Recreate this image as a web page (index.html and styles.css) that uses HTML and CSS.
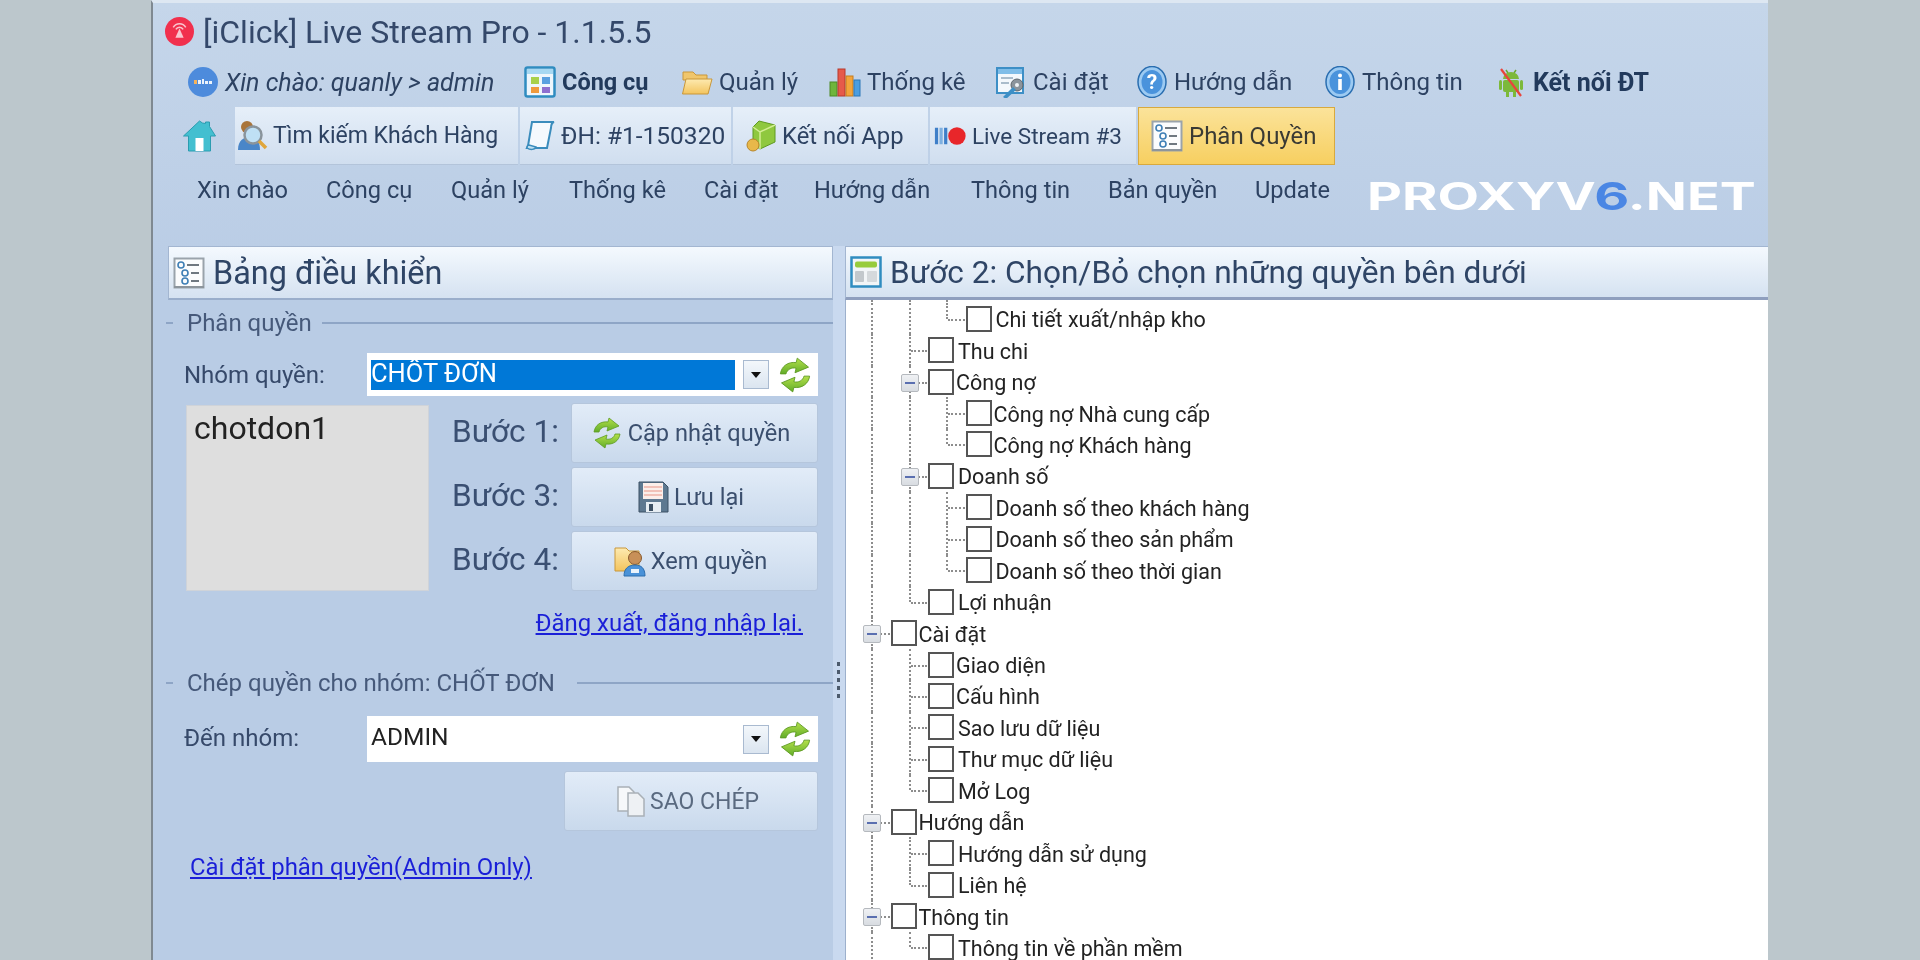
FILE: index.html
```html
<!DOCTYPE html>
<html lang="vi">
<head>
<meta charset="utf-8">
<title>[iClick] Live Stream Pro - 1.1.5.5</title>
<link rel="stylesheet" href="styles.css">
</head>
<body>
<svg class="defs" width="0" height="0" aria-hidden="true">
  <defs>
    <linearGradient id="g-green" x1="0" y1="0" x2="0" y2="1"><stop offset="0" stop-color="#b4e04a"/><stop offset="1" stop-color="#62ad2a"/></linearGradient>
    <linearGradient id="g-folder" x1="0" y1="0" x2="0" y2="1"><stop offset="0" stop-color="#fdeab0"/><stop offset="1" stop-color="#f3c45e"/></linearGradient>
    <symbol id="i-refresh" viewBox="0 0 32 32">
      <path d="M3 15C4 8 10 4 17 5l1-4 10 8-12 5 1-4c-4-1-8 1-9 5z" fill="url(#g-green)" stroke="#5d9a22" stroke-width=".8"/>
      <path d="M29 17c-1 7-7 11-14 10l-1 4-10-8 12-5-1 4c4 1 8-1 9-5z" fill="url(#g-green)" stroke="#5d9a22" stroke-width=".8"/>
    </symbol>
    <symbol id="i-rules" viewBox="0 0 32 32">
      <rect x="1.500" y="1.500" width="29" height="29" fill="#fbfcfd" stroke="#9aa3ab" stroke-width="2"/>
      <path d="M1 29h30v2H1z" fill="#8d959c"/>
      <circle cx="8" cy="8" r="3" fill="none" stroke="#3f7fb5" stroke-width="1.600"/>
      <circle cx="12" cy="16" r="3" fill="none" stroke="#3f7fb5" stroke-width="1.600"/>
      <circle cx="12" cy="24" r="3" fill="none" stroke="#3f7fb5" stroke-width="1.600"/>
      <path d="M14 8h12M18 16h8M18 24h8" stroke="#6f7880" stroke-width="2"/>
    </symbol>
  </defs>
</svg>

<main class="window">
  <header class="titlebar">
    <svg class="app-icon" viewBox="0 0 28 28" aria-hidden="true">
      <circle cx="14" cy="14" r="14" fill="#f1304d"/>
      <path d="M14 11l4 9h-8z" fill="#f9c6cf"/>
      <path d="M8 10a7 7 0 0 1 12 0M10.500 12a4 4 0 0 1 7 0" fill="none" stroke="#f9c6cf" stroke-width="1.500"/>
    </svg>
    <h1 class="app-title">[iClick] Live Stream Pro - 1.1.5.5</h1>
  </header>

  <nav class="iconmenu">
    <a class="iconmenu-item">
      <svg class="ico" viewBox="0 0 32 32" aria-hidden="true"><circle cx="16" cy="16" r="15" fill="#4d8bdc"/><rect x="7" y="14" width="3" height="4" fill="#f4b25a"/><path d="M11 14h3v4h-3zM15 13h2v5h-2zM18 15h3v3h-3zM22 15h3v3h-3z" fill="#eaf2fb"/></svg>
      <span class="greet">Xin chào: quanly &gt; admin</span>
    </a>
    <a class="iconmenu-item">
      <svg class="ico" viewBox="0 0 32 32" aria-hidden="true"><rect x="1.500" y="1.500" width="29" height="29" rx="2" fill="#eef6fc" stroke="#2f8cc0" stroke-width="2.500"/><rect x="3" y="3" width="26" height="5" fill="#a7d8f2"/><rect x="7" y="11" width="8" height="7" fill="#a9d14a"/><rect x="18" y="11" width="8" height="7" fill="#5aa0e0"/><rect x="7" y="21" width="8" height="6" fill="#f09a3c"/><rect x="18" y="21" width="8" height="6" fill="#8e6fd0"/></svg>
      <b class="strong">Công cụ</b>
    </a>
    <a class="iconmenu-item">
      <svg class="ico" viewBox="0 0 32 32" aria-hidden="true"><path d="M2 6h10l3 3h11v5H2z" fill="#f0c66c" stroke="#c9973a"/><path d="M1.500 28 5 13h26l-4 15z" fill="url(#g-folder)" stroke="#c9973a"/></svg>
      <span>Quản lý</span>
    </a>
    <a class="iconmenu-item">
      <svg class="ico" viewBox="0 0 32 32" aria-hidden="true"><rect x="1" y="16" width="7" height="14" fill="#6fb53c" stroke="#4d8a25"/><rect x="9" y="3" width="7" height="27" fill="#e65a4a" stroke="#b8382c"/><rect x="17" y="10" width="7" height="20" fill="#f3a43a" stroke="#c67d1c"/><rect x="25" y="14" width="6" height="16" fill="#4b9ee0" stroke="#2d78b8"/></svg>
      <span>Thống kê</span>
    </a>
    <a class="iconmenu-item">
      <svg class="ico" viewBox="0 0 32 32" aria-hidden="true"><rect x="2" y="2" width="26" height="25" fill="#f3f8fc" stroke="#3d8fc6" stroke-width="2"/><rect x="3" y="3" width="24" height="5" fill="#7fbde8"/><path d="M6 12h12M6 17h8" stroke="#a9bccb" stroke-width="2"/><circle cx="22" cy="19" r="6" fill="#8b949c" stroke="#5d666d"/><circle cx="22" cy="19" r="2" fill="#eef2f5"/><path d="M8 31l10-10 3 3-10 9z" fill="#3d8fc6"/></svg>
      <span>Cài đặt</span>
    </a>
    <a class="iconmenu-item">
      <svg class="ico" viewBox="0 0 32 32" aria-hidden="true"><ellipse cx="16" cy="16" rx="14" ry="15.500" fill="#9ccaf2" stroke="#2a6eb0" stroke-width="1.500"/><ellipse cx="16" cy="16" rx="10.500" ry="12" fill="#4a93dc"/><text class="glyph" x="16" y="23" text-anchor="middle">?</text></svg>
      <span>Hướng dẫn</span>
    </a>
    <a class="iconmenu-item">
      <svg class="ico" viewBox="0 0 32 32" aria-hidden="true"><ellipse cx="16" cy="16" rx="14" ry="15.500" fill="#9ccaf2" stroke="#2a6eb0" stroke-width="1.500"/><ellipse cx="16" cy="16" rx="10.500" ry="12" fill="#4a93dc"/><circle cx="16" cy="9.500" r="2" fill="#fff"/><rect x="14.200" y="13" width="3.600" height="11" fill="#fff"/></svg>
      <span>Thông tin</span>
    </a>
    <a class="iconmenu-item">
      <svg class="ico" viewBox="0 0 32 32" aria-hidden="true"><path d="M11 4l2 3M21 4l-2 3" stroke="#6aa82e" stroke-width="1.500"/><path d="M8 13a8 7 0 0 1 16 0z" fill="#7cb93a"/><rect x="8" y="14" width="16" height="12" rx="2" fill="#7cb93a"/><rect x="4" y="14" width="3" height="10" rx="1.500" fill="#7cb93a"/><rect x="25" y="14" width="3" height="10" rx="1.500" fill="#7cb93a"/><rect x="11" y="25" width="3" height="6" fill="#7cb93a"/><rect x="18" y="25" width="3" height="6" fill="#7cb93a"/><path d="M6 3l20 27" stroke="#e8443c" stroke-width="2.200"/></svg>
      <b class="strong strong-wide">Kết nối ĐT</b>
    </a>
  </nav>

  <nav class="tabbar">
    <svg class="home" viewBox="0 0 34 32" aria-hidden="true"><path d="M17 1 1 16h5v15h22V16h5L27 6.500V2h-4v1.500L20 3z" fill="#43bfd0" stroke="#2b9cb0"/><rect x="13" y="18" width="8" height="13" fill="#fff"/></svg>
    <a class="tab tab-search">
      <svg class="ico" viewBox="0 0 32 32" aria-hidden="true"><circle cx="10" cy="7" r="6" fill="#a9743a"/><path d="M1 30c0-10 6-13 12-13s10 4 10 13z" fill="#4a86c8"/><circle cx="16" cy="15" r="8.500" fill="#bfe0f5" stroke="#8a949c" stroke-width="2.500"/><path d="M22 21l7 7" stroke="#e0a63c" stroke-width="3.500"/></svg>
      <span>Tìm kiếm Khách Hàng</span>
    </a>
    <a class="tab tab-order">
      <svg class="ico" viewBox="0 0 32 32" aria-hidden="true"><path d="M8 2h22c-3 1-3 4-3 6l-4 20H3l1-2z" fill="#f4f9fd" stroke="#3a8cbc" stroke-width="2"/><path d="M3 28c3 2 8 2 9-1l-7-2c-2 0-2 2-2 3z" fill="#bfe0f2" stroke="#3a8cbc" stroke-width="1.500"/></svg>
      <span>ĐH: #1-150320</span>
    </a>
    <a class="tab tab-app">
      <svg class="ico" viewBox="0 0 32 32" aria-hidden="true"><path d="M14 1 30 5v17l-15 7L8 24V7z" fill="#8fc83f" stroke="#5f9a22"/><path d="M8 7l7 5 15-7M15 12v17" fill="none" stroke="#d3ed94" stroke-width="1.500"/><circle cx="8" cy="25" r="6" fill="#e8b84a" stroke="#b8862a"/></svg>
      <span>Kết nối App</span>
    </a>
    <a class="tab tab-live">
      <svg class="ico-wide" viewBox="0 0 36 26" aria-hidden="true"><rect x="1" y="4" width="3.500" height="18" fill="#3f7fc8"/><rect x="6" y="4" width="3.500" height="18" fill="#7fb0e0"/><rect x="11" y="4" width="3.500" height="18" fill="#3f7fc8"/><circle cx="25" cy="13" r="9.500" fill="#e8262a"/></svg>
      <span>Live Stream #3</span>
    </a>
    <a class="tab tab-active tab-perm">
      <svg class="ico"><use href="#i-rules"/></svg>
      <span>Phân Quyền</span>
    </a>
  </nav>

  <div class="textmenu-wrap">
    <nav class="textmenu">
      <a>Xin chào</a><a>Công cụ</a><a>Quản lý</a><a>Thống kê</a><a>Cài đặt</a><a>Hướng dẫn</a><a>Thông tin</a><a>Bản quyền</a><a>Update</a>
    </nav>
    <div class="watermark">PROXYV<span class="wm-six">6</span>.NET</div>
  </div>

  <div class="panes">
    <aside class="left-pane">
      <div class="pane-head pane-head-left">
        <svg class="ico pane-ico"><use href="#i-rules"/></svg>
        <h2>Bảng điều khiển</h2>
      </div>

      <div class="group-head"><span class="stub"></span><span class="group-title">Phân quyền</span><span class="rule"></span></div>

      <div class="form-row">
        <label class="form-label">Nhóm quyền:</label>
        <div class="combo combo-short">
          <span class="combo-value selected">CHỐT ĐƠN</span>
          <span class="combo-btn"><i class="caret"></i></span>
          <svg class="refresh"><use href="#i-refresh"/></svg>
        </div>
      </div>

      <div class="perm-body">
        <div class="userbox">chotdon1</div>
        <div class="steps">
          <div class="step"><span class="step-label">Bước 1:</span>
            <button class="btn"><svg class="ico"><use href="#i-refresh"/></svg>Cập nhật quyền</button></div>
          <div class="step"><span class="step-label">Bước 3:</span>
            <button class="btn"><svg class="ico" viewBox="0 0 32 32" aria-hidden="true"><path d="M2 1h24l5 5v25H2z" fill="#5d7890" stroke="#3c5064"/><rect x="6" y="2" width="20" height="16" fill="#fbeeea"/><path d="M7 6h18M7 10h18M7 14h18" stroke="#eeb2a8" stroke-width="1.500"/><rect x="9" y="21" width="15" height="10" fill="#e6edf3"/><rect x="12" y="23" width="4" height="7" fill="#3c5064"/></svg>Lưu lại</button></div>
          <div class="step"><span class="step-label">Bước 4:</span>
            <button class="btn"><svg class="ico" viewBox="0 0 32 32" aria-hidden="true"><path d="M1 3h11l3 3h10v20H1z" fill="url(#g-folder)" stroke="#c9973a"/><circle cx="21" cy="13" r="6.500" fill="#c89058" stroke="#8a5a2c"/><path d="M10 31c0-8 5-11 11-11s10 3 10 11z" fill="#4a92d8" stroke="#2d6eae"/><rect x="17" y="24" width="8" height="4" fill="#eaf3fb"/></svg>Xem quyền</button></div>
        </div>
      </div>

      <div class="link-row link-right"><a class="link">Đăng xuất, đăng nhập lại.</a></div>

      <div class="group-head group-second"><span class="stub"></span><span class="group-title">Chép quyền cho nhóm: CHỐT ĐƠN</span><span class="rule"></span></div>

      <div class="form-row form-row-second">
        <label class="form-label">Đến nhóm:</label>
        <div class="combo combo-tall">
          <span class="combo-value">ADMIN</span>
          <span class="combo-btn"><i class="caret"></i></span>
          <svg class="refresh"><use href="#i-refresh"/></svg>
        </div>
      </div>

      <div class="copy-row">
        <button class="btn btn-copy"><svg class="ico" viewBox="0 0 32 32" aria-hidden="true"><path d="M3 2h11l5 5v19H3z" fill="#f6f8fa" stroke="#a9b0b6" stroke-width="1.500"/><path d="M13 8h10l6 6v17H13z" fill="#eef1f4" stroke="#a9b0b6" stroke-width="1.500"/></svg>SAO CHÉP</button>
      </div>

      <div class="link-row link-left"><a class="link">Cài đặt phân quyền(Admin Only)</a></div>
    </aside>

    <div class="splitter"><span class="grip"></span></div>

    <section class="right-pane">
      <div class="pane-head pane-head-right">
        <svg class="ico pane-ico" viewBox="0 0 32 32" aria-hidden="true"><rect x="1.500" y="1.500" width="29" height="29" fill="#f2f5f7" stroke="#2f8cc0" stroke-width="2.500"/><rect x="5" y="5.500" width="22" height="6" rx="2" fill="#97cc3c"/><rect x="5" y="15" width="9" height="11" rx="1" fill="#c3c8cc"/><rect x="17" y="15" width="10" height="11" rx="1" fill="#d5d9dc"/></svg>
        <h2>Bước 2: Chọn/Bỏ chọn những quyền bên dưới</h2>
      </div>

      <ul class="tree">
        <li class="tree-top"><i class="c v"></i><i class="c v"></i><i class="c v"></i></li>
        <li class="node"><i class="c v"></i><i class="c v"></i><i class="c l"></i><i class="box"></i><span class="tx tx-r">Chi tiết xuất/nhập kho</span></li>
        <li class="node"><i class="c v"></i><i class="c t"></i><i class="box"></i><span class="tx tx-r">Thu chi</span></li>
        <li class="node"><i class="c v"></i><i class="c x"><b></b></i><i class="box"></i><span class="tx">Công nợ</span></li>
        <li class="node"><i class="c v"></i><i class="c v"></i><i class="c t"></i><i class="box"></i><span class="tx">Công nợ Nhà cung cấp</span></li>
        <li class="node"><i class="c v"></i><i class="c v"></i><i class="c l"></i><i class="box"></i><span class="tx">Công nợ Khách hàng</span></li>
        <li class="node"><i class="c v"></i><i class="c x"><b></b></i><i class="box"></i><span class="tx tx-r">Doanh số</span></li>
        <li class="node"><i class="c v"></i><i class="c v"></i><i class="c t"></i><i class="box"></i><span class="tx tx-r">Doanh số theo khách hàng</span></li>
        <li class="node"><i class="c v"></i><i class="c v"></i><i class="c t"></i><i class="box"></i><span class="tx tx-r">Doanh số theo sản phẩm</span></li>
        <li class="node"><i class="c v"></i><i class="c v"></i><i class="c l"></i><i class="box"></i><span class="tx tx-r">Doanh số theo thời gian</span></li>
        <li class="node"><i class="c v"></i><i class="c l"></i><i class="box"></i><span class="tx tx-r">Lợi nhuận</span></li>
        <li class="node"><i class="c x"><b></b></i><i class="box"></i><span class="tx">Cài đặt</span></li>
        <li class="node"><i class="c v"></i><i class="c t"></i><i class="box"></i><span class="tx">Giao diện</span></li>
        <li class="node"><i class="c v"></i><i class="c t"></i><i class="box"></i><span class="tx">Cấu hình</span></li>
        <li class="node"><i class="c v"></i><i class="c t"></i><i class="box"></i><span class="tx tx-r">Sao lưu dữ liệu</span></li>
        <li class="node"><i class="c v"></i><i class="c t"></i><i class="box"></i><span class="tx tx-r">Thư mục dữ liệu</span></li>
        <li class="node"><i class="c v"></i><i class="c l"></i><i class="box"></i><span class="tx tx-r">Mở Log</span></li>
        <li class="node"><i class="c x"><b></b></i><i class="box"></i><span class="tx">Hướng dẫn</span></li>
        <li class="node"><i class="c v"></i><i class="c t"></i><i class="box"></i><span class="tx tx-r">Hướng dẫn sử dụng</span></li>
        <li class="node"><i class="c v"></i><i class="c l"></i><i class="box"></i><span class="tx tx-r">Liên hệ</span></li>
        <li class="node"><i class="c x"><b></b></i><i class="box"></i><span class="tx">Thông tin</span></li>
        <li class="node"><i class="c v"></i><i class="c l"></i><i class="box"></i><span class="tx tx-r">Thông tin về phần mềm</span></li>
      </ul>
    </section>
  </div>
</main>
</body>
</html>
```

FILE: styles.css
```css
* { box-sizing: border-box; }
html, body { margin: 0; height: 960px; overflow: hidden; }
body {
  background: #bcc7cc;
  padding-left: 151px;
  font-family: Roboto, "Noto Sans", sans-serif;
  color: #2d4262;
}
.defs { position: absolute; }
a { display: block; }
svg { display: block; flex: none; }
h1, h2 { margin: 0; font-weight: 400; }

.window {
  width: 1617px;
  height: 960px;
  overflow: hidden;
  display: flex;
  flex-direction: column;
  border-left: 2px solid #7f8991;
  border-top: 3px solid #dde7f2;
  background: linear-gradient(#c5d6ea, #b9cce5 30%, #b9cce5);
  filter: blur(.55px);
}

/* Title */
.titlebar { height: 57px; display: flex; align-items: center; padding-left: 12px; gap: 9px; }
.app-icon { width: 29px; height: 29px; }
.app-title { font-size: 32px; color: #34486a; }

/* Icon menu */
.iconmenu {
  display: grid;
  grid-template-columns: 337px 157px 148px 166px 141px 188px 171px auto;
  height: 44px;
  padding-left: 34px;
  align-items: center;
}
.iconmenu-item { display: flex; align-items: center; gap: 6px; font-size: 24px; white-space: nowrap; }
.ico { width: 32px; height: 32px; }
.glyph { fill: #fff; font-size: 21px; font-weight: 700; }
.greet { font-style: italic; font-size: 25px; }
.strong { font-weight: 700; font-size: 23.500px; color: #223a5c; }
.strong-wide { font-size: 25px; }

/* Tabs */
.tabbar { display: flex; align-items: center; gap: 2px; height: 58px; margin-top: 3px; padding-left: 29px; }
.home { width: 35px; height: 32px; margin-right: 16px; }
.tab {
  height: 58px;
  display: flex;
  align-items: center;
  gap: 5px;
  padding-left: 3px;
  font-size: 23px;
  white-space: nowrap;
  background: linear-gradient(#e6eff9, #d0deef);
  border-bottom: 1px solid #b3c4da;
}
.tab-search { width: 283px; padding-left: 2px; gap: 4px; }
.tab-order { width: 211px; font-size: 24.500px; padding-left: 4px; }
.tab-app { width: 195px; font-size: 23.800px; padding-left: 12px; }
.tab-live { width: 206px; font-size: 22.500px; padding-left: 4px; }
.tab-perm { width: 197px; }
.tab-active {
  background: linear-gradient(#fbe39a, #f7cf60);
  border: 1px solid #d8a93e;
  color: #3a3a34;
  padding-left: 12px;
  gap: 6px;
  font-size: 24px;
}
.ico-wide { width: 33px; height: 26px; }

/* Text menu */
.textmenu-wrap { height: 81px; position: relative; }
.textmenu {
  display: grid;
  grid-template-columns: 129px 125px 118px 135px 110px 157px 137px 147px auto;
  padding: 11px 0 0 44px;
  font-size: 23.600px;
  white-space: nowrap;
}
.watermark {
  position: absolute;
  left: 1214px;
  top: 9px;
  font-family: Inter, "Liberation Sans", sans-serif;
  font-weight: 700;
  font-size: 38px;
  line-height: 44px;
  color: #fff;
  white-space: nowrap;
  transform: scaleX(1.420);
  transform-origin: left center;
}
.wm-six { color: #4a86e4; }

/* Panes */
.panes { flex: 1; min-height: 0; display: flex; padding-left: 15px; }
.left-pane { width: 665px; flex: none; }
.splitter { width: 12px; flex: none; background: #c9d9ef; position: relative; }
.grip {
  position: absolute;
  left: 4px;
  top: 416px;
  width: 3px;
  height: 36px;
  background: repeating-linear-gradient(#4c5a6c 0 4px, transparent 4px 8px);
}
.right-pane { flex: 1; min-width: 0; display: flex; flex-direction: column; }

.pane-head {
  height: 54px;
  display: flex;
  align-items: center;
  gap: 8px;
  padding-left: 4px;
  background: linear-gradient(#f4f9fe, #d5e2f1);
  border: 1px solid #a3b6d1;
  border-bottom: 2px solid #9aaecb;
}
.pane-head h2 { font-size: 32.400px; color: #2f4566; }
.pane-head-right { height: 54px; border-right: 0; border-bottom: 3px solid #8f9fbe; }
.pane-head-right h2 { font-size: 31.600px; }
.pane-ico { width: 32px; height: 32px; }

/* Groups */
.group-head { height: 46px; display: flex; align-items: center; margin-left: -2px; font-size: 24px; color: #46597a; }
.stub { width: 7px; height: 2px; background: #8ea5c6; margin-right: 14px; flex: none; }
.rule { flex: 1; height: 2px; background: #8ea5c6; margin-left: 10px; }
.group-second { margin-top: 23px; }
.group-second .rule { margin-left: 22px; }

/* Forms */
.form-row { display: flex; align-items: center; margin-top: 7px; padding-left: 16px; }
.form-row-second { margin-top: 10px; }
.form-label { width: 183px; font-size: 24px; color: #36496a; }
.form-row-second .form-label { padding-bottom: 2px; }
.combo { width: 451px; background: #fff; display: flex; align-items: center; padding-left: 4px; }
.combo-short { height: 43px; }
.combo-tall { height: 46px; }
.combo-value { width: 364px; height: 30px; line-height: 26px; font-size: 24.500px; color: #222; white-space: nowrap; }
.selected { background: #0078d7; color: #fff; font-size: 25.500px; }
.combo-btn {
  width: 26px; height: 29px; margin-left: 8px;
  display: flex; align-items: center; justify-content: center;
  background: linear-gradient(#f3f7fb, #dbe5f0);
  border: 1px solid #a9bad0;
}
.caret { width: 0; height: 0; border: 5px solid transparent; border-top: 6px solid #111; border-bottom: 0; }
.refresh { width: 36px; height: 36px; margin-left: 8px; }

.perm-body { display: flex; margin: 9px 0 0 18px; }
.userbox { width: 243px; height: 186px; background: #dedede; padding: 1px 7px; font-size: 32px; line-height: 42px; color: #222; border: 1px solid #cfd3d9; }
.steps { margin: -2px 0 0 23px; display: flex; flex-direction: column; gap: 4px; }
.step { display: flex; align-items: center; }
.step-label { width: 119px; font-size: 31.500px; color: #3a4f72; padding-bottom: 4px; }
.btn {
  width: 247px;
  height: 60px;
  display: flex;
  align-items: center;
  justify-content: center;
  gap: 5px;
  font: inherit;
  font-size: 23.600px;
  color: #3b4f6e;
  background: linear-gradient(#e2ecf8, #c9d9ec);
  border: 1px solid #b5c6dc;
  border-radius: 3px;
  padding: 0 8px 0 0;
}
.link-row { height: 28px; font-size: 23.900px; line-height: 28px; }
.link-right { margin-top: 18px; display: flex; justify-content: flex-end; padding-right: 30px; }
.link-left { margin-top: 22px; padding-left: 22px; }
.link { color: #1a1fd8; text-decoration: underline; white-space: nowrap; }
.copy-row { display: flex; justify-content: flex-end; margin-top: 9px; padding-right: 15px; }
.btn-copy { width: 254px; color: #5a6a80; font-size: 23px; gap: 3px; }

/* Tree */
.tree {
  flex: 1;
  min-height: 0;
  margin: 0;
  padding: 0 0 0 7px;
  list-style: none;
  background: #fff;
  border-left: 1px solid #9db0cc;
  overflow: hidden;
}
.tree-top { height: 3px; display: flex; }
.node { height: 31.450px; display: flex; align-items: center; }
.c { width: 37.500px; height: 100%; flex: none; position: relative; display: block; }
.c::before {
  content: "";
  position: absolute;
  left: 18px;
  top: 0;
  bottom: 0;
  border-left: 2px dotted #8d8d8d;
}
.t::after, .l::after, .x::after {
  content: "";
  position: absolute;
  left: 20px;
  right: 1px;
  top: 50%;
  border-top: 2px dotted #8d8d8d;
}
.l::before { bottom: 50%; }
.x b {
  position: absolute;
  left: 10px;
  top: 50%;
  width: 18px;
  height: 18px;
  margin-top: -8px;
  z-index: 1;
  background: linear-gradient(#eff1f4, #d8dce1);
  border: 1px solid #b5b9be;
  border-radius: 2px;
}
.x b::before {
  content: "";
  position: absolute;
  left: 3px;
  right: 3px;
  top: 7px;
  height: 2px;
  background: #5a6fb0;
}
.box { width: 26px; height: 26px; flex: none; display: block; border: 2px solid #555; }
.tx { margin-left: 2px; padding-top: 2px; font-size: 21.500px; color: #222; white-space: nowrap; }
.tx-r { margin-left: 4px; }
```
